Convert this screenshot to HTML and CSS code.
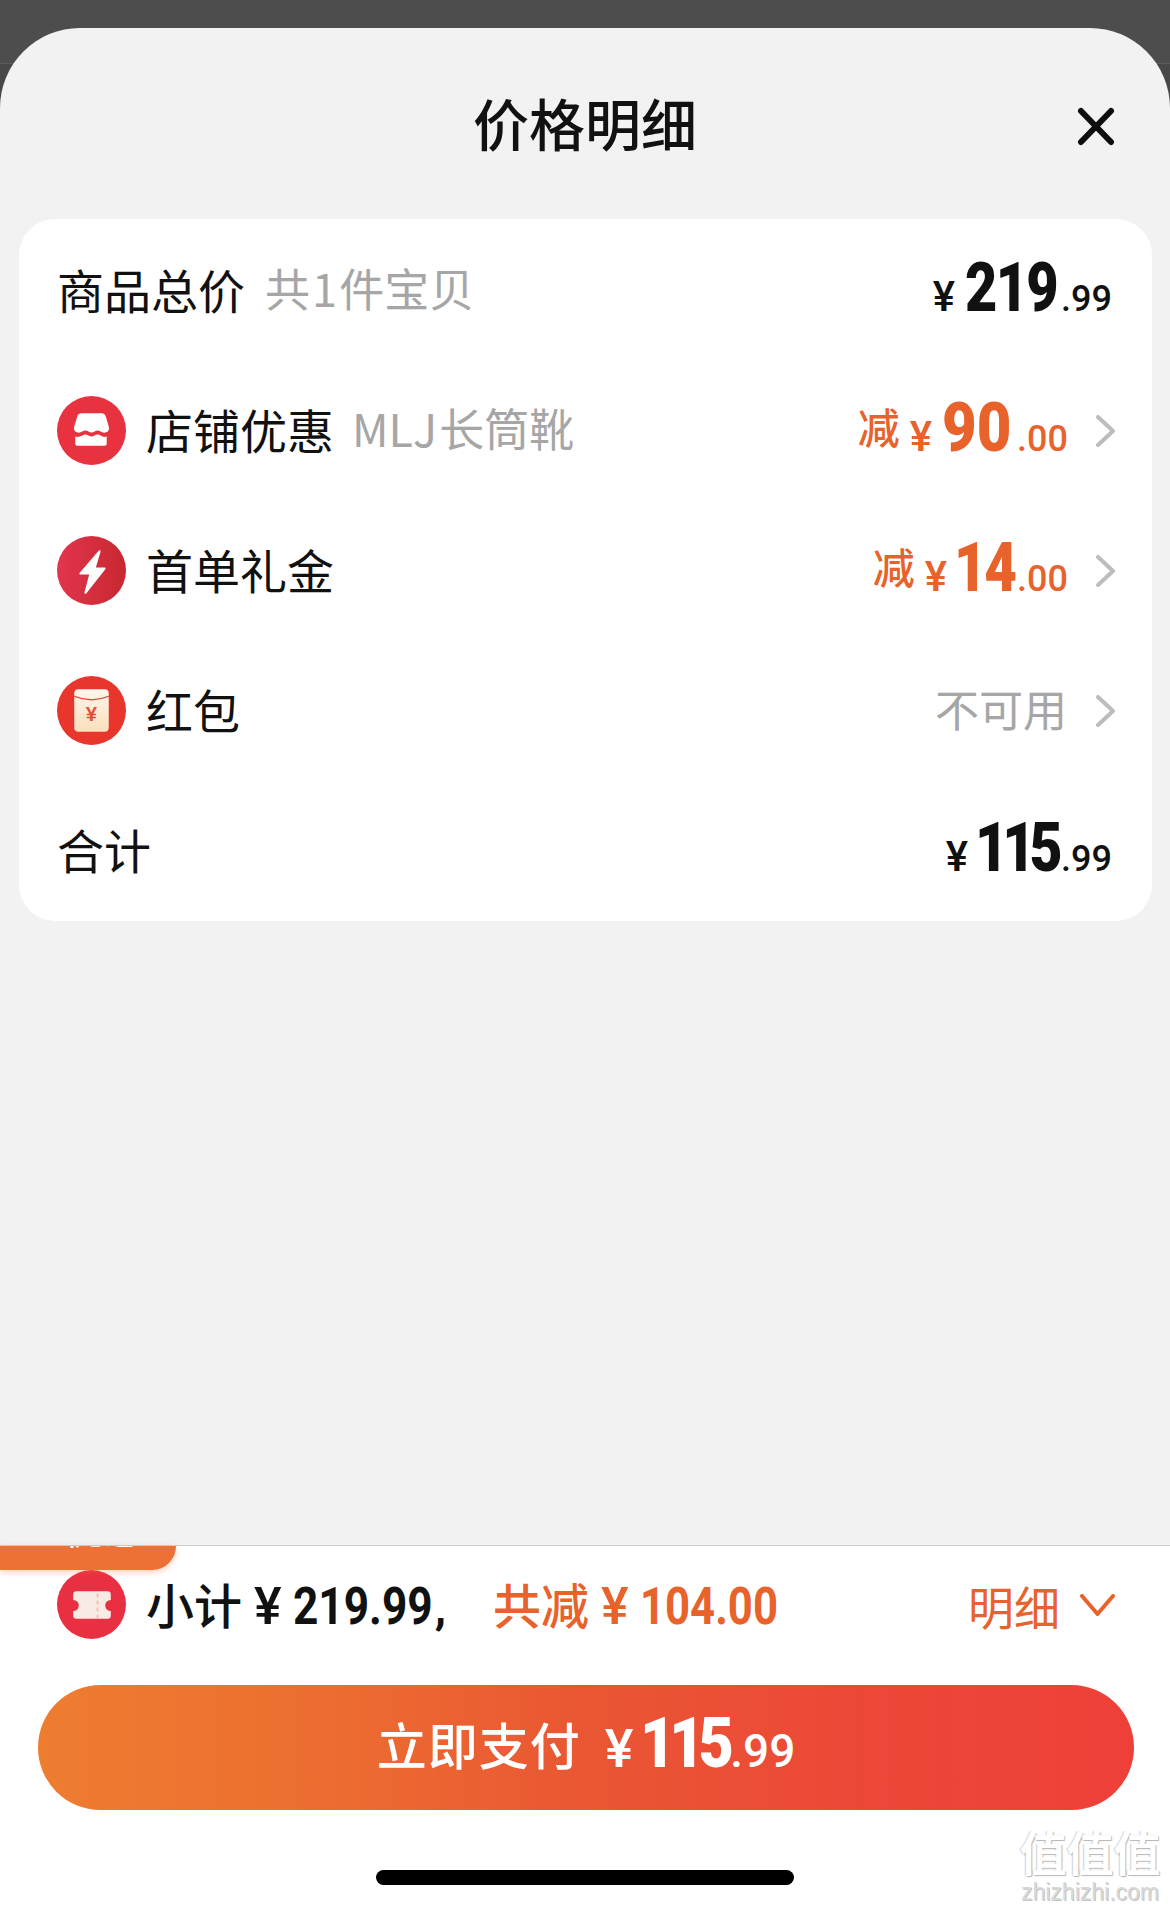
FILE: index.html
```html
<!DOCTYPE html>
<html lang="zh-CN">
<head>
<meta charset="utf-8">
<title>价格明细</title>
<link rel="stylesheet" href="styles.css">
</head>
<body>
<div class="sheet">
  <header class="head">
    <span></span>
    <h1 class="title">价格明细</h1>
    <svg class="close" viewBox="0 0 38 39" width="38" height="39"><path d="M4 4 L34 35 M34 4 L4 35" fill="none" stroke="#0d0d0d" stroke-width="6" stroke-linecap="round"/></svg>
  </header>
  <main class="main">
    <section class="card">
      <div class="row">
        <div class="left"><span class="label">商品总价</span><span class="sub">共 1 件宝贝</span></div>
        <div class="right pad"><span class="money"><span class="yen">¥</span><span class="int t219">219</span><span class="dec">.99</span></span></div>
      </div>
      <div class="row">
        <div class="left">
          <svg class="icon" viewBox="0 0 68 68" width="69" height="69"><circle cx="34" cy="34" r="34" fill="#e8323f"/><path d="M24 17H44Q47 17 48 20L51 30Q52 34 49 35.500Q46 37 43 35Q40 33 37 35Q34 37 31 35Q28 33 25 35Q22 37 19 35.500Q16 34 17 30L20 20Q21 17 24 17Z" fill="#fff"/><path d="M18 40Q21 41 25 39Q28 37 31 39Q34 41 37 39Q40 37 43 39Q46 41 49 40V47Q49 49 47 49H20Q18 49 18 47Z" fill="#fff"/></svg>
          <span class="label">店铺优惠</span><span class="sub tight">MLJ 长筒靴</span>
        </div>
        <div class="right"><span class="minus">减</span><span class="money orange"><span class="yen">¥</span><span class="int t90">90</span><span class="dec">.00</span></span>
          <svg class="chev" viewBox="0 0 19 32" width="19" height="32"><path d="M2 2L17 16L2 30" fill="none" stroke="#bdbdbd" stroke-width="4" stroke-linecap="round" stroke-linejoin="round"/></svg></div>
      </div>
      <div class="row">
        <div class="left">
          <svg class="icon" viewBox="0 0 68 68" width="69" height="69"><defs><linearGradient id="bolt"><stop offset="0" stop-color="#e2354f"/><stop offset="1" stop-color="#c7282f"/></linearGradient></defs><circle cx="34" cy="34" r="34" fill="url(#bolt)"/><path d="M42 15L23 37H33L28 56L47 32H37Z" fill="#fff" stroke="#fff" stroke-width="2" stroke-linejoin="round"/></svg>
          <span class="label">首单礼金</span>
        </div>
        <div class="right"><span class="minus">减</span><span class="money orange"><span class="yen">¥</span><span class="int t14">14</span><span class="dec">.00</span></span>
          <svg class="chev" viewBox="0 0 19 32" width="19" height="32"><path d="M2 2L17 16L2 30" fill="none" stroke="#bdbdbd" stroke-width="4" stroke-linecap="round" stroke-linejoin="round"/></svg></div>
      </div>
      <div class="row">
        <div class="left">
          <svg class="icon" viewBox="0 0 68 68" width="69" height="69"><defs><linearGradient id="env" x1="0" y1="0" x2="0" y2="1"><stop offset="0" stop-color="#fff6ea"/><stop offset="1" stop-color="#fbdfbd"/></linearGradient></defs><circle cx="34" cy="34" r="34" fill="#e8362c"/><rect x="17" y="13" width="34" height="42" rx="4" fill="url(#env)"/><path d="M17 20Q34 27 51 20" fill="none" stroke="#e8362c" stroke-width="1.200"/><text x="34" y="44" text-anchor="middle" class="env-yen">¥</text></svg>
          <span class="label">红包</span>
        </div>
        <div class="right"><span class="na">不可用</span>
          <svg class="chev" viewBox="0 0 19 32" width="19" height="32"><path d="M2 2L17 16L2 30" fill="none" stroke="#bdbdbd" stroke-width="4" stroke-linecap="round" stroke-linejoin="round"/></svg></div>
      </div>
      <div class="row">
        <div class="left"><span class="label">合计</span></div>
        <div class="right pad"><span class="money"><span class="yen">¥</span><span class="int t115">115</span><span class="dec">.99</span></span></div>
      </div>
    </section>
  </main>
  <footer class="foot">
    <div class="tag"><span class="tag-text">优惠</span></div>
    <div class="summary">
      <div class="left">
        <svg class="icon" viewBox="0 0 68 68" width="69" height="69"><circle cx="34" cy="34" r="34" fill="#e93042"/><path d="M19 21H50Q53 21 53 24V29.500A5.500 5.500 0 0 0 53 40.500V45Q53 48 50 48H19Q16 48 16 45V40.500A5.500 5.500 0 0 0 16 29.500V24Q16 21 19 21Z" fill="#f8ebe4"/><path d="M40 23V47" stroke="#f0c2b8" stroke-width="2" stroke-dasharray="4 3"/></svg>
        <span class="subtotal"><span class="cjk">小计</span><span class="sum-yen">¥</span><span class="sum-num n219">219.99</span><span class="comma">,</span></span>
        <span class="subtotal orange cut"><span class="cjk">共减</span><span class="sum-yen">¥</span><span class="sum-num n104">104.00</span></span>
      </div>
      <div class="detail"><span>明细</span><svg viewBox="0 0 35 22" width="35" height="22"><path d="M2 2L17.500 20L33 2" fill="none" stroke="#e8622c" stroke-width="4" stroke-linecap="round" stroke-linejoin="round"/></svg></div>
    </div>
    <button class="pay" type="button"><span class="pay-text">立即支付</span><span class="money pay-money"><span class="yen">¥</span><span class="int t115p">115</span><span class="dec">.99</span></span></button>
    <div class="home"></div>
  </footer>
</div>
<div class="mark"><span class="mark-cn">值值值</span><span class="mark-en">zhizhizhi.com</span></div>
</body>
</html>
```

FILE: styles.css
```css
* { box-sizing: border-box; }
html, body { margin: 0; padding: 0; }
body {
  width: 1170px;
  height: 1909px;
  overflow: hidden;
  position: relative;
  padding-top: 28px;
  background: linear-gradient(#4d4d4d 63px, #5c5c5c 63px, #5c5c5c 64px, #484848 64px);
  font-family: "Noto Sans CJK SC", "Noto Sans", sans-serif;
  color: #111;
}
.sheet {
  height: 1881px;
  display: flex;
  flex-direction: column;
  background: #f2f2f2;
  border-radius: 80px 80px 0 0;
}
.head {
  height: 191px;
  flex: none;
  display: grid;
  grid-template-columns: 1fr auto 1fr;
  align-items: center;
  padding: 0 55px;
}
.title { margin: 0 0 4px; font-size: 56px; font-weight: 500; line-height: 70px; color: #111; }
.close { justify-self: end; margin-top: 6px; }
.main { flex: 1; padding: 0 18px 0 19px; }
.card {
  background: #fff;
  border-radius: 36px;
  padding: 1px 37px 1px 38px;
}
.row {
  height: 140px;
  display: flex;
  align-items: center;
  justify-content: space-between;
}
.left { display: flex; align-items: center; }
.icon { flex: none; margin-right: 20px; }
.label { font-size: 47px; line-height: 60px; margin-bottom: 3px; }
.sub { margin: 0 0 5px 20px; font-size: 45px; line-height: 60px; color: #a6a6a6; word-spacing: -8px; }
.sub.tight { margin-left: 18px; }
.right { display: flex; align-items: center; }
.right.pad { padding-right: 4px; }
.money {
  display: inline-flex;
  align-items: baseline;
  margin-bottom: 4px;
  font-family: Roboto, "Liberation Sans", sans-serif;
  font-weight: 700;
}
.yen { font-size: 42px; font-weight: 500; margin-right: 10px; }
.int {
  display: inline-block;
  font-size: 68px;
  font-weight: 900;
  line-height: 70px;
  white-space: nowrap;
  transform-origin: 0 50%;
}
.dec {
  display: inline-block;
  width: 50px;
  font-size: 36px;
  font-weight: 500;
  margin-left: 6px;
  white-space: nowrap;
  transform-origin: 0 50%;
}
.t219 { width: 90px; letter-spacing: -2px; transform: scaleX(.82); }
.t90 { width: 69px; transform: scaleX(.88); }
.t14 { width: 57px; margin-left: -3px; letter-spacing: -3px; transform: scaleX(.83); }
.t115 { width: 80px; margin-left: -3px; letter-spacing: -7px; transform: scaleX(.84); }
.orange { color: #e8622c; }
.minus { font-size: 42px; font-weight: 500; line-height: 60px; color: #e8622c; margin: 0 10px 8px 0; }
.na { font-size: 44px; line-height: 60px; margin-bottom: 4px; color: #a6a6a6; }
.chev { flex: none; margin: 2px 0 0 29px; }
.env-yen { font-size: 20px; font-weight: 700; fill: #e2503a; font-family: "Liberation Sans", sans-serif; }

.foot {
  position: relative;
  flex: none;
  height: 364px;
  background: #fff;
  border-top: 1px solid #cfcfcf;
  display: flex;
  flex-direction: column;
}
.tag {
  position: absolute;
  left: 0;
  top: 0;
  width: 176px;
  height: 24px;
  overflow: hidden;
  background: #ed7035;
  border-radius: 0 0 30px 0;
  box-shadow: 0 2px 6px rgba(237, 112, 53, .35);
  color: #fff;
  padding-left: 64px;
}
.tag-text { display: block; margin-top: -41px; font-size: 40px; line-height: 44px; }
.summary {
  margin-top: 24px;
  height: 69px;
  flex: none;
  padding: 0 55px 0 57px;
  display: flex;
  align-items: center;
  justify-content: space-between;
}
.subtotal { display: inline-flex; align-items: baseline; font-weight: 500; }
.cjk { font-size: 48px; line-height: 60px; }
.sum-yen, .sum-num, .comma { font-family: Roboto, "Liberation Sans", sans-serif; font-weight: 700; }
.sum-yen { font-size: 52px; font-weight: 500; margin: 0 11px 0 12px; }
.sum-num {
  display: inline-block;
  font-size: 52px;
  white-space: nowrap;
  transform-origin: 0 50%;
}
.n219 { width: 134px; transform: scaleX(.85); }
.n104 { width: 136px; transform: scaleX(.84); }
.comma { font-size: 46px; margin-left: 8px; }
.cut { margin-left: 47px; }
.detail { display: flex; align-items: center; color: #e8622c; font-size: 46px; line-height: 60px; }
.detail svg { margin-left: 20px; }
.pay {
  margin: 46px 36px 0 38px;
  height: 125px;
  flex: none;
  padding: 0 0 5px;
  border: 0;
  border-radius: 63px;
  background: linear-gradient(90deg, #ee7d30 0%, #ec6a31 30%, #ea5633 50%, #ec4838 75%, #ee4039 100%);
  color: #fff;
  display: flex;
  align-items: center;
  justify-content: center;
  font-family: inherit;
}
.pay-text { font-size: 50px; font-weight: 500; letter-spacing: 1px; line-height: 70px; margin: 0 24px 4px 0; }
.pay-money { margin-bottom: 3px; }
.pay-money .yen { font-size: 54px; margin-right: 7px; }
.pay-money .int { font-size: 70px; }
.t115p { width: 86px; letter-spacing: -7px; transform: scaleX(.87); }
.pay-money .dec { width: 65px; font-size: 46px; margin-left: 4px; }
.home {
  margin: 60px auto 0;
  width: 418px;
  height: 15px;
  flex: none;
  border-radius: 8px;
  background: #000;
}
.mark {
  position: absolute;
  right: 9px;
  bottom: 5px;
  width: 142px;
  display: flex;
  flex-direction: column;
  align-items: center;
}
.mark-cn {
  font-size: 47px;
  line-height: 58px;
  font-weight: 700;
  color: #fff;
  text-shadow: 1px 1px 1px #b5b5b5, -1px 0 1px #cfcfcf;
}
.mark-en {
  font-family: "Liberation Sans", sans-serif;
  font-size: 23px;
  line-height: 24px;
  color: #d9d9d9;
  text-shadow: 1px 1px 0 #c4c4c4;
}
```
